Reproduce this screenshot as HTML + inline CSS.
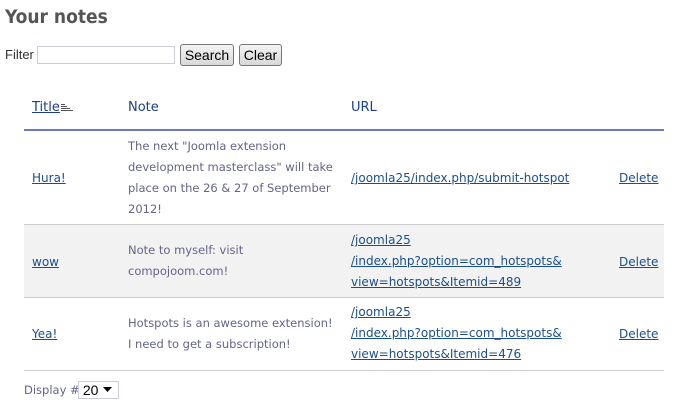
<!DOCTYPE html>
<html><head><meta charset="utf-8"><style>
body{margin:0;width:680px;height:408px;background:#fff;font-family:"DejaVu Sans","Liberation Sans",sans-serif;position:relative;overflow:hidden}
.a{position:absolute;white-space:nowrap}
h1{position:absolute;left:5px;top:6px;margin:0;font-size:19px;font-weight:bold;color:#555;font-family:"DejaVu Sans Condensed","DejaVu Sans",sans-serif}
.f{font-family:"Liberation Sans",sans-serif;font-size:13px;color:#333}
.btn{position:absolute;top:44px;height:20px;border:1px solid #777;border-radius:3px;background:linear-gradient(#f4f4f4,#d8d8d8);font-family:"Liberation Sans",sans-serif;font-size:14px;line-height:20px;text-align:center;color:#000}
.th{font-size:13px;color:#1b3f8a;top:100px}
.lk{color:#1b4f8a;text-decoration:underline;font-size:12px}
.nt{color:#64648a;font-size:11.5px;line-height:21px}
.hl{position:absolute;left:24px;width:640px;height:1px;background:#ccc}
</style></head><body>
<h1>Your notes</h1>
<div class="a f" style="left:5px;top:47px">Filter</div>
<div class="a" style="left:37px;top:46px;width:136px;height:16px;border:1px solid #ccd;"></div>
<div class="btn" style="left:180px;width:52px">Search</div>
<div class="btn" style="left:239px;width:41px">Clear</div>
<div class="a th" style="left:32px;text-decoration:underline">Title</div>
<svg class="a" style="left:61px;top:103px" width="13" height="10"><g stroke="#555" stroke-width="1"><line x1="0" y1="1.5" x2="4" y2="1.5"/><line x1="0" y1="3.5" x2="6" y2="3.5"/><line x1="0" y1="5.5" x2="9" y2="5.5"/><line x1="0" y1="7.5" x2="12" y2="7.5"/></g></svg>
<div class="a th" style="left:128px">Note</div>
<div class="a th" style="left:351px">URL</div>
<div class="a" style="left:24px;top:129px;width:640px;height:2px;background:#6a7db0"></div>
<div class="a" style="left:24px;top:225px;width:640px;height:72px;background:#f2f2f2"></div>
<div class="hl" style="top:224px"></div>
<div class="hl" style="top:297px"></div>
<div class="hl" style="top:370px"></div>
<div class="a lk" style="left:32px;top:171px">Hura!</div>
<div class="a nt" style="left:128px;top:136px">The next "Joomla extension<br>development masterclass" will take<br>place on the 26 &amp; 27 of September<br>2012!</div>
<div class="a lk" style="left:351px;top:171px">/joomla25/index.php/submit-hotspot</div>
<div class="a lk" style="left:619px;top:171px">Delete</div>
<div class="a lk" style="left:32px;top:255px">wow</div>
<div class="a nt" style="left:128px;top:240px">Note to myself: visit<br>compojoom.com!</div>
<div class="a lk" style="left:351px;top:230px;line-height:21px">/joomla25<br>/index.php?option=com_hotspots&amp;<br>view=hotspots&amp;Itemid=489</div>
<div class="a lk" style="left:619px;top:255px">Delete</div>
<div class="a lk" style="left:32px;top:327px">Yea!</div>
<div class="a nt" style="left:128px;top:313px">Hotspots is an awesome extension!<br>I need to get a subscription!</div>
<div class="a lk" style="left:351px;top:302px;line-height:21px">/joomla25<br>/index.php?option=com_hotspots&amp;<br>view=hotspots&amp;Itemid=476</div>
<div class="a lk" style="left:619px;top:327px">Delete</div>
<div class="a nt" style="left:24px;top:380px">Display #</div>
<div class="a" style="left:78px;top:381px;width:39px;height:16px;border:1px solid #ccd;font-family:'Liberation Sans',sans-serif;font-size:14px;line-height:16px;color:#000">&nbsp;20</div>
<svg class="a" style="left:103px;top:387px" width="10" height="6"><path d="M0 0H9L4.5 5Z" fill="#000"/></svg>
</body></html>
